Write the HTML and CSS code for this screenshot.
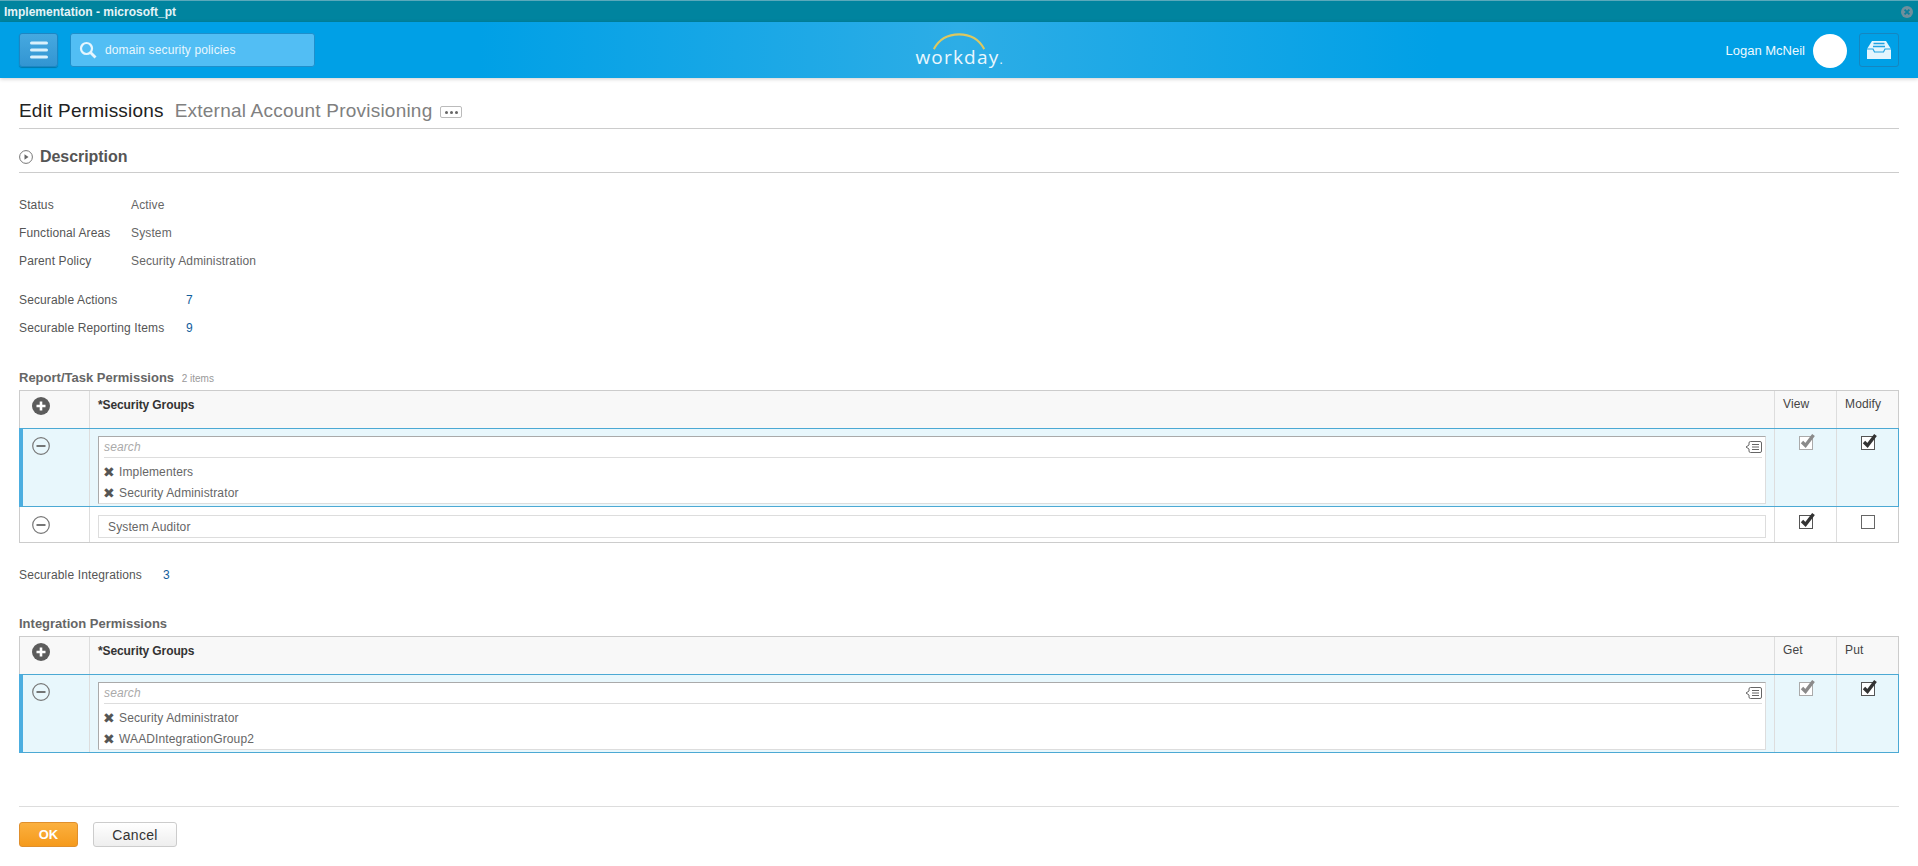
FILE: index.html
```html
<!DOCTYPE html>
<html lang="en">
<head>
  <meta charset="UTF-8" />
  <title>Edit Permissions</title>
  <link rel="stylesheet" href="styles.css">
</head>
<body>

<div class="titlebar">
  <span class="titlebar-text">Implementation - microsoft_pt</span>
  <svg class="titlebar-close" width="12" height="12" viewBox="0 0 12 12">
    <circle cx="6" cy="6" r="6" fill="#6f8f9c"/>
    <path d="M3.6 3.6l4.8 4.8M8.4 3.6l-4.8 4.8" stroke="#0b7f9c" stroke-width="1.8"/>
  </svg>
</div>

<header class="topbar">
  <div class="topbar-left">
    <button class="menu-btn" type="button">
      <svg width="18" height="18" viewBox="0 0 18 18">
        <path d="M1.500 2h15M1.500 9h15M1.500 16h15" stroke="#d9f1fc" stroke-width="3" stroke-linecap="round"/>
      </svg>
    </button>
    <div class="search-box">
      <svg width="18" height="18" viewBox="0 0 18 18">
        <circle cx="7.500" cy="7.500" r="5.500" fill="none" stroke="#e6f6fe" stroke-width="2.200"/>
        <path d="M11.500 11.500l5 5" stroke="#e6f6fe" stroke-width="2.800"/>
      </svg>
      <span>domain security policies</span>
    </div>
  </div>
  <div class="logo">
    <svg class="logo-arc" width="70" height="20" viewBox="0 0 70 20">
      <path d="M3 17C12 3 26 1.500 35 1.500S58 3 67 17" transform="translate(6 1) scale(.83 1)" fill="none" stroke="#dcc860" stroke-width="2.500"/>
    </svg>
    <span class="logo-text">workday<i>.</i></span>
  </div>
  <div class="topbar-right">
    <span class="user-name">Logan McNeil</span>
    <span class="avatar"></span>
    <button class="inbox-btn" type="button">
      <svg width="26" height="20" viewBox="0 0 26 20">
        <path d="M6 1h14l5 8v10H1V9z" fill="#e4f5fd"/>
        <path d="M7.500 3.500h11M7 6.500h12" stroke="#20a3e2" stroke-width="1.600"/>
        <path d="M1 9h6l1.500 3h9L19 9h6" fill="none" stroke="#20a3e2" stroke-width="1.200"/>
      </svg>
    </button>
  </div>
</header>

<main class="page">
  <div class="page-title">
    <h1>Edit Permissions</h1>
    <span class="page-subject">External Account Provisioning</span>
    <span class="related-btn"><i></i><i></i><i></i></span>
  </div>

  <div class="section-head">
    <svg width="14" height="14" viewBox="0 0 14 14">
      <circle cx="7" cy="7" r="6.400" fill="none" stroke="#777" stroke-width="1"/>
      <path d="M5.500 4.300L9.500 7l-4 2.700z" fill="#666"/>
    </svg>
    <h2>Description</h2>
  </div>

  <dl class="fields">
    <div class="field"><dt>Status</dt><dd>Active</dd></div>
    <div class="field"><dt>Functional Areas</dt><dd>System</dd></div>
    <div class="field"><dt>Parent Policy</dt><dd>Security Administration</dd></div>
  </dl>

  <dl class="fields fields-counts">
    <div class="field"><dt>Securable Actions</dt><dd><a href="#">7</a></dd></div>
    <div class="field"><dt>Securable Reporting Items</dt><dd><a href="#">9</a></dd></div>
  </dl>

  <h3 class="grid-title">Report/Task Permissions <small>2 items</small></h3>
  <div class="grid">
    <div class="row row-head">
      <div class="cell cell-action">
        <svg class="add-icon" width="18" height="18" viewBox="0 0 18 18">
          <circle cx="9" cy="9" r="9" fill="#5c5c5c"/>
          <path d="M9 4.500v9M4.500 9h9" stroke="#fff" stroke-width="2.600"/>
        </svg>
      </div>
      <div class="cell cell-main">*Security Groups</div>
      <div class="cell cell-check">View</div>
      <div class="cell cell-check">Modify</div>
    </div>

    <div class="row row-active">
      <div class="cell cell-action">
        <svg class="remove-icon" width="18" height="18" viewBox="0 0 18 18">
          <circle cx="9" cy="9" r="8.300" fill="none" stroke="#777" stroke-width="1.200"/>
          <path d="M4.500 9h9" stroke="#666" stroke-width="1.800"/>
        </svg>
      </div>
      <div class="cell cell-main">
        <div class="multi">
          <div class="multi-search">
            <span>search</span>
            <svg width="17" height="14" viewBox="0 0 17 14">
              <path d="M5.500 1.500h9.500a1.500 1.500 0 0 1 1.500 1.500v8a1.500 1.500 0 0 1-1.500 1.500H5.500A1.500 1.500 0 0 1 4 11V9L1 7l3-2V3a1.500 1.500 0 0 1 1.500-1.500z" fill="none" stroke="#666"/>
              <path d="M7 4.500h7M7 7h7M7 9.500h7" stroke="#666"/>
            </svg>
          </div>
          <div class="tag"><span class="tag-x">&#10006;</span>Implementers</div>
          <div class="tag"><span class="tag-x">&#10006;</span>Security Administrator</div>
        </div>
      </div>
      <div class="cell cell-check">
        <svg class="check" width="17" height="18" viewBox="0 0 17 18">
          <rect x=".5" y="3.500" width="13" height="13" fill="#fff" stroke="#aaa"/>
          <path d="M3 9l3.500 3.500 8-10.500" fill="none" stroke="#8a8a8a" stroke-width="3.400"/>
        </svg>
      </div>
      <div class="cell cell-check">
        <svg class="check" width="17" height="18" viewBox="0 0 17 18">
          <rect x=".5" y="3.500" width="13" height="13" fill="#fff" stroke="#555"/>
          <path d="M3 9l3.500 3.500 8-10.500" fill="none" stroke="#333" stroke-width="3.400"/>
        </svg>
      </div>
    </div>

    <div class="row row-plain">
      <div class="cell cell-action">
        <svg class="remove-icon" width="18" height="18" viewBox="0 0 18 18">
          <circle cx="9" cy="9" r="8.300" fill="none" stroke="#777" stroke-width="1.200"/>
          <path d="M4.500 9h9" stroke="#666" stroke-width="1.800"/>
        </svg>
      </div>
      <div class="cell cell-main"><div class="readonly">System Auditor</div></div>
      <div class="cell cell-check">
        <svg class="check" width="17" height="18" viewBox="0 0 17 18">
          <rect x=".5" y="3.500" width="13" height="13" fill="#fff" stroke="#555"/>
          <path d="M3 9l3.500 3.500 8-10.500" fill="none" stroke="#333" stroke-width="3.400"/>
        </svg>
      </div>
      <div class="cell cell-check">
        <svg class="check" width="17" height="18" viewBox="0 0 17 18">
          <rect x=".5" y="3.500" width="13" height="13" fill="#fff" stroke="#666"/>
        </svg>
      </div>
    </div>
  </div>

  <dl class="fields fields-integrations">
    <div class="field"><dt>Securable Integrations</dt><dd><a href="#">3</a></dd></div>
  </dl>

  <h3 class="grid-title grid-title-second">Integration Permissions</h3>
  <div class="grid">
    <div class="row row-head">
      <div class="cell cell-action">
        <svg class="add-icon" width="18" height="18" viewBox="0 0 18 18">
          <circle cx="9" cy="9" r="9" fill="#5c5c5c"/>
          <path d="M9 4.500v9M4.500 9h9" stroke="#fff" stroke-width="2.600"/>
        </svg>
      </div>
      <div class="cell cell-main">*Security Groups</div>
      <div class="cell cell-check">Get</div>
      <div class="cell cell-check">Put</div>
    </div>

    <div class="row row-active">
      <div class="cell cell-action">
        <svg class="remove-icon" width="18" height="18" viewBox="0 0 18 18">
          <circle cx="9" cy="9" r="8.300" fill="none" stroke="#777" stroke-width="1.200"/>
          <path d="M4.500 9h9" stroke="#666" stroke-width="1.800"/>
        </svg>
      </div>
      <div class="cell cell-main">
        <div class="multi">
          <div class="multi-search">
            <span>search</span>
            <svg width="17" height="14" viewBox="0 0 17 14">
              <path d="M5.500 1.500h9.500a1.500 1.500 0 0 1 1.500 1.500v8a1.500 1.500 0 0 1-1.500 1.500H5.500A1.500 1.500 0 0 1 4 11V9L1 7l3-2V3a1.500 1.500 0 0 1 1.500-1.500z" fill="none" stroke="#666"/>
              <path d="M7 4.500h7M7 7h7M7 9.500h7" stroke="#666"/>
            </svg>
          </div>
          <div class="tag"><span class="tag-x">&#10006;</span>Security Administrator</div>
          <div class="tag"><span class="tag-x">&#10006;</span>WAADIntegrationGroup2</div>
        </div>
      </div>
      <div class="cell cell-check">
        <svg class="check" width="17" height="18" viewBox="0 0 17 18">
          <rect x=".5" y="3.500" width="13" height="13" fill="#fff" stroke="#aaa"/>
          <path d="M3 9l3.500 3.500 8-10.500" fill="none" stroke="#8a8a8a" stroke-width="3.400"/>
        </svg>
      </div>
      <div class="cell cell-check">
        <svg class="check" width="17" height="18" viewBox="0 0 17 18">
          <rect x=".5" y="3.500" width="13" height="13" fill="#fff" stroke="#555"/>
          <path d="M3 9l3.500 3.500 8-10.500" fill="none" stroke="#333" stroke-width="3.400"/>
        </svg>
      </div>
    </div>
  </div>

  <div class="actions">
    <button class="btn btn-ok" type="button">OK</button>
    <button class="btn btn-cancel" type="button">Cancel</button>
  </div>
</main>

</body>
</html>
```

FILE: styles.css
```css
* {
  box-sizing: border-box;
}
body {
  margin: 0;
  height: 866px;
  overflow: hidden;
  background: #fff;
  color: #555;
  font-family: "Liberation Sans", Arial, sans-serif;
  font-size: 12px;
  letter-spacing: .13px;
}
button {
  font-family: inherit;
  padding: 0;
}

.titlebar {
  height: 22px;
  padding: 0 5px 0 4px;
  display: flex;
  align-items: center;
  justify-content: space-between;
  background: #00849f;
  border-top: 1px solid #5aa9bb;
}
.titlebar-text {
  color: #e4f3f7;
  font-size: 12px;
  font-weight: bold;
  letter-spacing: 0;
}

.topbar {
  height: 56px;
  padding: 11px 19px 0;
  display: grid;
  grid-template-columns: 1fr auto 1fr;
  align-items: start;
  background: linear-gradient(90deg, #00a0e6 0%, #00a0e6 25%, #2dade6 50%, #00a0e6 75%, #00a0e6 100%);
  box-shadow: 0 1px 4px rgba(0, 0, 0, .2);
}
.topbar-left {
  display: flex;
  gap: 12px;
}
.menu-btn {
  width: 39px;
  height: 34px;
  display: flex;
  align-items: center;
  justify-content: center;
  background: linear-gradient(#46a9e0, #3295d2);
  border: 1px solid #1d86c3;
  border-radius: 3px;
  box-shadow: 0 1px 1px rgba(0, 0, 0, .25);
}
.search-box {
  width: 245px;
  height: 34px;
  padding-left: 8px;
  display: flex;
  align-items: center;
  gap: 8px;
  background: #52bef4;
  border: 1px solid #1f8fcb;
  border-radius: 3px;
  color: #e8f7fe;
  font-size: 12px;
}
.logo {
  margin-top: -1px;
  width: 90px;
  height: 40px;
  display: flex;
  flex-direction: column;
  align-items: center;
}
.logo-arc {
  margin-bottom: -6px;
}
.logo-text {
  color: #eaf7fd;
  font-family: "Open Sans", sans-serif;
  font-size: 19px;
  line-height: 24px;
  letter-spacing: 1.200px;
}
.logo-text i {
  font-size: 12px;
  font-style: normal;
  letter-spacing: 0;
}
.topbar-right {
  display: flex;
  justify-content: flex-end;
  align-items: center;
  height: 34px;
}
.user-name {
  color: #eef9fe;
  font-size: 13px;
  letter-spacing: 0;
}
.avatar {
  width: 34px;
  height: 34px;
  margin: 2px 12px 0 8px;
  background: #fff;
  border-radius: 50%;
}
.inbox-btn {
  width: 40px;
  height: 34px;
  display: flex;
  align-items: center;
  justify-content: center;
  background: transparent;
  border: 1px solid #1586c0;
  border-radius: 3px;
}

.page {
  padding: 0 19px;
}
.page-title {
  height: 51px;
  padding-top: 15px;
  display: flex;
  align-items: center;
  border-bottom: 1px solid #ccc;
}
.page-title h1 {
  margin: 0;
  color: #222;
  font-size: 19px;
  font-weight: normal;
  letter-spacing: .2px;
}
.page-subject {
  margin-left: 11px;
  color: #808080;
  font-size: 19px;
  letter-spacing: .22px;
}
.related-btn {
  width: 22px;
  height: 12px;
  margin: 3px 0 0 8px;
  display: flex;
  align-items: center;
  justify-content: center;
  gap: 2px;
  border: 1px solid #bbb;
  border-radius: 2px;
}
.related-btn i {
  width: 3px;
  height: 3px;
  background: #666;
  border-radius: 50%;
}

.section-head {
  height: 44px;
  padding-top: 13px;
  display: flex;
  align-items: center;
  gap: 7px;
  border-bottom: 1px solid #ccc;
}
.section-head h2 {
  margin: 0;
  color: #555;
  font-size: 16px;
  letter-spacing: -.05px;
}

.fields {
  margin: 18px 0 0;
}
.field {
  height: 28px;
  display: flex;
  align-items: center;
}
.field dt {
  width: 112px;
}
.field dd {
  margin: 0;
  color: #666;
}
.field a {
  color: #125e9c;
  text-decoration: none;
}
.fields-counts {
  margin-top: 11px;
}
.fields-counts dt {
  width: 167px;
}
.fields-integrations {
  margin-top: 18px;
}
.fields-integrations dt {
  width: 144px;
}

.grid-title {
  margin: 28px 0 0;
  height: 20px;
  color: #666;
  font-size: 13px;
  line-height: 15px;
  letter-spacing: 0;
}
.grid-title-second {
  margin-top: 27px;
}
.grid-title small {
  margin-left: 4px;
  color: #999;
  font-size: 10px;
  font-weight: normal;
}
.grid {
  width: 1880px;
  border: 1px solid #ccc;
  border-bottom: 0;
}
.row {
  display: grid;
  grid-template-columns: 69px 1fr 62px 62px;
}
.cell {
  padding: 7px 8px 0;
  border-left: 1px solid #ddd;
}
.cell:first-child {
  border-left: 0;
}
.cell-action {
  padding: 6px 0 0 12px;
}
.row-head {
  height: 37px;
  background: #f8f8f8;
  color: #444;
}
.row-head .cell-main {
  color: #333;
  font-weight: bold;
  letter-spacing: -.1px;
}
.row-active {
  height: 79px;
  margin: 0 -1px;
  grid-template-columns: 66px 1fr 62px 62px;
  background: #e8f7fc;
  border: 1px solid #4ca9d4;
  border-left: 4px solid #4caee0;
}
.row-plain {
  height: 36px;
  border-bottom: 1px solid #ccc;
}
.row-active .cell-action {
  padding: 8px 0 0 9px;
}
.row-plain .cell-action {
  padding-top: 9px;
}
.cell-check {
  padding-top: 4px;
  padding-left: 24px;
}
.row-plain .cell-check {
  padding-top: 5px;
}
.row-head .cell-check {
  padding: 6px 0 0 8px;
  font-weight: normal;
}
.multi {
  height: 68px;
  background: #fff;
  border: 1px solid #ddd;
  border-top-color: #aaa;
  border-left-color: #aaa;
}
.multi-search {
  height: 21px;
  margin: 0 3px 3px 5px;
  display: flex;
  align-items: center;
  justify-content: space-between;
  border-bottom: 1px solid #ddd;
  color: #aaa;
  font-style: italic;
}
.tag {
  height: 21px;
  padding-left: 4px;
  display: flex;
  align-items: center;
  color: #666;
}
.tag-x {
  width: 16px;
  color: #555;
  font-family: "DejaVu Sans", sans-serif;
  font-size: 14px;
  line-height: 1;
}
.row-plain .cell-main {
  padding-top: 8px;
}
.readonly {
  height: 23px;
  padding-left: 9px;
  display: flex;
  align-items: center;
  border: 1px solid #ddd;
  color: #666;
}

.actions {
  margin-top: 53px;
  padding-top: 15px;
  display: flex;
  gap: 15px;
  border-top: 1px solid #ddd;
}
.btn {
  height: 25px;
  border-radius: 3px;
  font-size: 13px;
}
.btn-ok {
  width: 59px;
  background: linear-gradient(#fbb03f, #f59a1c);
  border: 1px solid #e08f2c;
  color: #fff;
  font-weight: bold;
}
.btn-cancel {
  width: 84px;
  background: linear-gradient(#fff, #eee);
  border: 1px solid #ccc;
  color: #333;
  font-size: 14px;
  letter-spacing: .3px;
}
```
